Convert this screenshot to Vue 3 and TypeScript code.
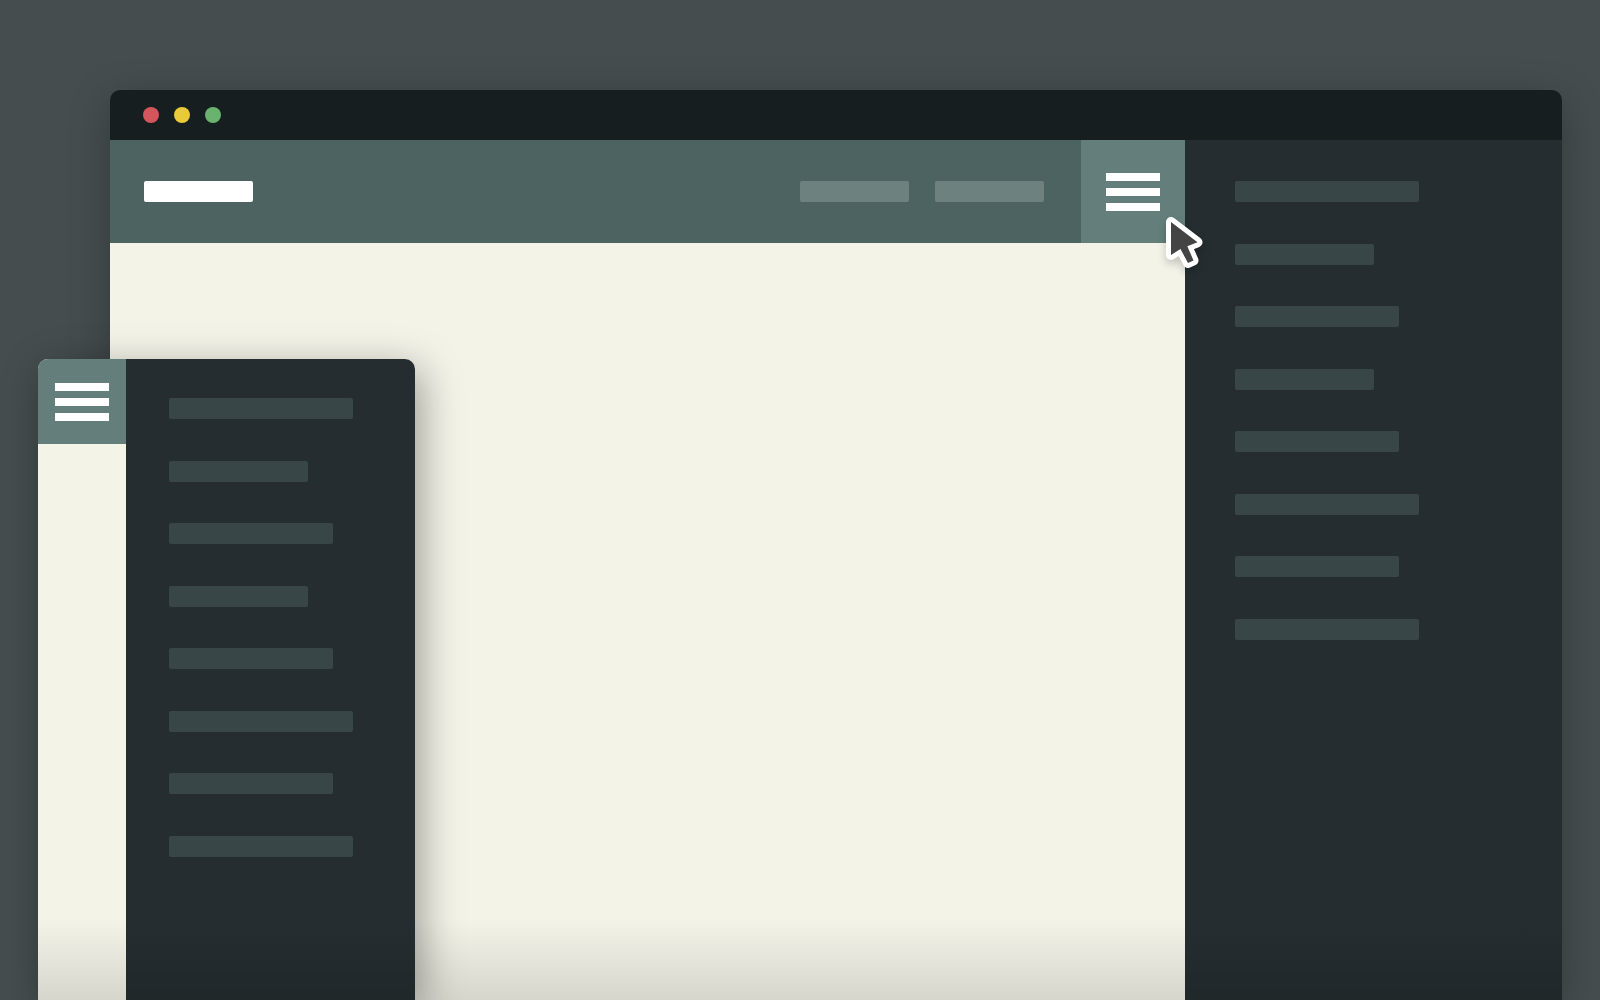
<script setup lang="ts">
type Size = 'long' | 'short' | 'medium'

const items: Size[] = ['long', 'short', 'medium', 'short', 'medium', 'long', 'medium', 'long']
</script>

<template>
  <main class="stage">
    <section class="browser">
      <div class="titlebar">
        <i class="dot red"></i>
        <i class="dot yellow"></i>
        <i class="dot green"></i>
      </div>
      <div class="browser-body">
        <div class="page">
          <header class="header">
            <a href="#" class="logo" aria-label="Home"></a>
            <nav class="links">
              <a href="#" aria-label="First link"></a>
              <a href="#" aria-label="Second link"></a>
            </nav>
            <button type="button" class="toggle" aria-label="Toggle menu">
              <span></span><span></span><span></span>
              <svg class="cursor" viewBox="0 0 60 60" aria-hidden="true">
                <path
                  d="M11 12V45L20.5 39L28 53L33.5 50.5L27.3 36.3L37.5 32.3Z"
                  fill="#444"
                  stroke="#fff"
                  stroke-width="10"
                  stroke-linejoin="round"
                  paint-order="stroke"
                />
              </svg>
            </button>
          </header>
        </div>
        <aside class="drawer">
          <ul>
            <li v-for="(size, i) in items" :key="i" :class="size"></li>
          </ul>
        </aside>
      </div>
    </section>

    <section class="phone">
      <div class="phone-page">
        <button type="button" class="toggle" aria-label="Toggle menu">
          <span></span><span></span><span></span>
        </button>
      </div>
      <aside class="drawer">
        <ul>
          <li v-for="(size, i) in items" :key="i" :class="size"></li>
        </ul>
      </aside>
    </section>
  </main>
</template>

<style>
body {
  background: #454d4e;
  font-family: "Liberation Sans", sans-serif;
}
</style>

<style scoped>
.stage {
  position: relative;
  display: flex;
  box-sizing: border-box;
  min-height: 100vh;
  padding: 90px 38px 0 110px;
  overflow: hidden;
}

.browser {
  position: relative;
  flex: 1;
  display: flex;
  flex-direction: column;
  border-radius: 10px 10px 0 0;
  box-shadow: 0 10px 40px rgba(0, 0, 0, 0.25);
}

/* shade along the bottom edge of each window */
.browser::after,
.phone::after {
  content: "";
  position: absolute;
  inset: auto 0 0;
  height: 80px;
  background: linear-gradient(rgba(0, 0, 0, 0), rgba(0, 0, 0, 0.12));
  pointer-events: none;
}

.titlebar {
  display: flex;
  align-items: center;
  gap: 15px;
  height: 50px;
  padding-left: 33px;
  border-radius: 10px 10px 0 0;
  background: #161e1f;
}

.dot {
  width: 16px;
  height: 16px;
  border-radius: 50%;
}

.red {
  background: #d4565c;
}

.yellow {
  background: #e8ca3a;
}

.green {
  background: #69b36f;
}

.browser-body {
  flex: 1;
  display: flex;
}

.page {
  flex: 1;
  background: #f4f3e8;
}

.header {
  display: flex;
  align-items: center;
  height: 103px;
  padding-left: 34px;
  background: #4d6361;
}

.logo,
.links a {
  width: 109px;
  height: 21px;
  border-radius: 2px;
}

.logo {
  background: #fff;
}

.links {
  display: flex;
  gap: 26px;
  margin: 0 37px 0 auto;
}

.links a {
  background: #6d817e;
}

.toggle {
  position: relative;
  display: flex;
  flex-direction: column;
  align-items: center;
  justify-content: center;
  gap: 7px;
  width: 104px;
  height: 103px;
  padding: 0;
  border: 0;
  background: #647f7b;
  cursor: pointer;
}

.toggle span {
  width: 54px;
  height: 8px;
  background: #fff;
}

.cursor {
  position: absolute;
  left: 79px;
  top: 70px;
  z-index: 1;
  width: 60px;
  height: 60px;
  overflow: visible;
  filter: drop-shadow(0 4px 4px rgba(0, 0, 0, 0.2));
}

.drawer {
  box-sizing: border-box;
  width: 377px;
  padding: 41px 50px 0;
  background: #252d30;
}

.drawer ul {
  margin: 0;
  padding: 0;
  list-style: none;
}

.drawer li {
  height: 21px;
  margin-bottom: 41px;
  border-radius: 2px;
  background: #394647;
}

.drawer li:nth-child(odd) {
  margin-bottom: 42px;
}

.long {
  width: 184px;
}

.medium {
  width: 164px;
}

.short {
  width: 139px;
}

.phone {
  position: absolute;
  left: 38px;
  top: 359px;
  bottom: 0;
  z-index: 2;
  display: flex;
  border-radius: 10px 10px 0 0;
  box-shadow: 6px 10px 40px rgba(0, 0, 0, 0.37);
}

.phone-page {
  width: 88px;
  border-radius: 10px 0 0 0;
  background: #f4f3e8;
}

.phone .toggle {
  width: 88px;
  height: 85px;
  border-radius: 10px 0 0 0;
}

.phone .drawer {
  width: 289px;
  padding: 39px 43px 0;
  border-radius: 0 10px 0 0;
}
</style>
